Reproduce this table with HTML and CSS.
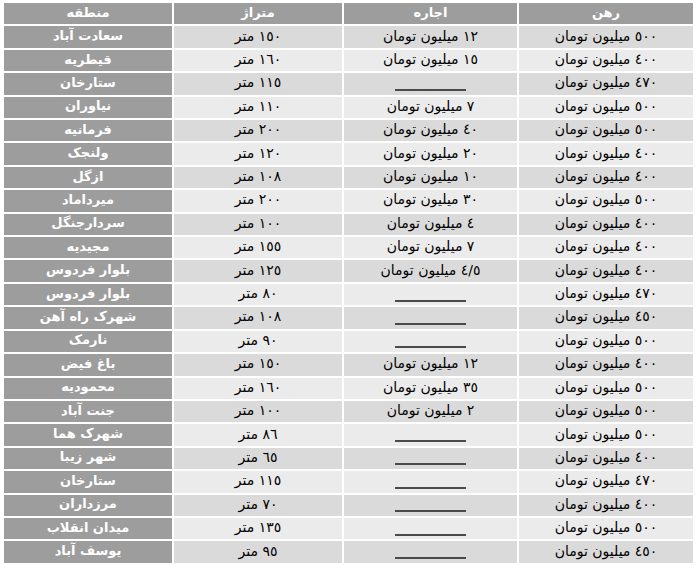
FILE: index.html
```html
<!DOCTYPE html>
<html lang="fa">
<head>
<meta charset="utf-8">
<title>جدول قیمت رهن و اجاره</title>
<link rel="stylesheet" href="styles.css">
</head>
<body>
<div class="table">
  <div class="cell head">منطقه</div><div class="cell head">متراژ</div><div class="cell head">اجاره</div><div class="cell head">رهن</div>

  <div class="cell area">سعادت آباد</div><div class="cell odd">١٥٠ متر</div><div class="cell odd">١٢ میلیون تومان</div><div class="cell odd">٥٠٠ میلیون تومان</div>
  <div class="cell area">قیطریه</div><div class="cell even">١٦٠ متر</div><div class="cell even">١٥ میلیون تومان</div><div class="cell even">٤٠٠ میلیون تومان</div>
  <div class="cell area">ستارخان</div><div class="cell odd">١١٥ متر</div><div class="cell odd"><span class="dash"></span></div><div class="cell odd">٤٧٠ میلیون تومان</div>
  <div class="cell area">نیاوران</div><div class="cell even">١١٠ متر</div><div class="cell even">٧ میلیون تومان</div><div class="cell even">٥٠٠ میلیون تومان</div>
  <div class="cell area">فرمانیه</div><div class="cell odd">٢٠٠ متر</div><div class="cell odd">٤٠ میلیون تومان</div><div class="cell odd">٥٠٠ میلیون تومان</div>
  <div class="cell area">ولنجک</div><div class="cell even">١٢٠ متر</div><div class="cell even">٢٠ میلیون تومان</div><div class="cell even">٤٠٠ میلیون تومان</div>
  <div class="cell area">ازگل</div><div class="cell odd">١٠٨ متر</div><div class="cell odd">١٠ میلیون تومان</div><div class="cell odd">٤٠٠ میلیون تومان</div>
  <div class="cell area">میرداماد</div><div class="cell even">٢٠٠ متر</div><div class="cell even">٣٠ میلیون تومان</div><div class="cell even">٥٠٠ میلیون تومان</div>
  <div class="cell area">سردارجنگل</div><div class="cell odd">١٠٠ متر</div><div class="cell odd">٤ میلیون تومان</div><div class="cell odd">٤٠٠ میلیون تومان</div>
  <div class="cell area">مجیدیه</div><div class="cell even">١٥٥ متر</div><div class="cell even">٧ میلیون تومان</div><div class="cell even">٤٠٠ میلیون تومان</div>
  <div class="cell area">بلوار فردوس</div><div class="cell odd">١٢٥ متر</div><div class="cell odd">٤/٥ میلیون تومان</div><div class="cell odd">٤٠٠ میلیون تومان</div>
  <div class="cell area">بلوار فردوس</div><div class="cell even">٨٠ متر</div><div class="cell even"><span class="dash"></span></div><div class="cell even">٤٧٠ میلیون تومان</div>
  <div class="cell area">شهرک راه آهن</div><div class="cell odd">١٠٨ متر</div><div class="cell odd"><span class="dash"></span></div><div class="cell odd">٤٥٠ میلیون تومان</div>
  <div class="cell area">نارمک</div><div class="cell even">٩٠ متر</div><div class="cell even"><span class="dash"></span></div><div class="cell even">٥٠٠ میلیون تومان</div>
  <div class="cell area">باغ فیض</div><div class="cell odd">١٥٠ متر</div><div class="cell odd">١٢ میلیون تومان</div><div class="cell odd">٤٠٠ میلیون تومان</div>
  <div class="cell area">محمودیه</div><div class="cell even">١٦٠ متر</div><div class="cell even">٣٥ میلیون تومان</div><div class="cell even">٥٠٠ میلیون تومان</div>
  <div class="cell area">جنت آباد</div><div class="cell odd">١٠٠ متر</div><div class="cell odd">٢ میلیون تومان</div><div class="cell odd">٥٠٠ میلیون تومان</div>
  <div class="cell area">شهرک هما</div><div class="cell even">٨٦ متر</div><div class="cell even"><span class="dash"></span></div><div class="cell even">٥٠٠ میلیون تومان</div>
  <div class="cell area">شهر زیبا</div><div class="cell odd">٦٥ متر</div><div class="cell odd"><span class="dash"></span></div><div class="cell odd">٤٠٠ میلیون تومان</div>
  <div class="cell area">ستارخان</div><div class="cell even">١١٥ متر</div><div class="cell even"><span class="dash"></span></div><div class="cell even">٤٧٠ میلیون تومان</div>
  <div class="cell area">مرزداران</div><div class="cell odd">٧٠ متر</div><div class="cell odd"><span class="dash"></span></div><div class="cell odd">٤٠٠ میلیون تومان</div>
  <div class="cell area">میدان انقلاب</div><div class="cell even">١٣٥ متر</div><div class="cell even"><span class="dash"></span></div><div class="cell even">٥٠٠ میلیون تومان</div>
  <div class="cell area">یوسف آباد</div><div class="cell odd">٩٥ متر</div><div class="cell odd"><span class="dash"></span></div><div class="cell odd">٤٥٠ میلیون تومان</div>
</div>
</body>
</html>
```

FILE: styles.css
```css
html, body {
  margin: 0;
  padding: 0;
  background: #ffffff;
}

body {
  font-family: "DejaVu Sans", sans-serif;
}

.table {
  display: grid;
  grid-template-columns: 168px 168px 173px 174px;
  grid-auto-rows: 21.42px;
  gap: 2px;
  width: max-content;
  margin: 3px 0 0 4px;
}

.cell {
  display: flex;
  align-items: center;
  justify-content: center;
  direction: rtl;
  font-size: 14px;
  color: #000000;
  padding-bottom: 3px;
  box-sizing: border-box;
  white-space: nowrap;
}

.head {
  background: #9d9d9d;
  color: #ffffff;
  font-weight: bold;
  font-size: 13px;
}

.area {
  background: #9d9d9d;
  color: #ffffff;
  font-weight: bold;
  font-size: 13px;
}

.odd {
  background: #dadada;
}

.even {
  background: #ebebeb;
}

.dash {
  display: block;
  width: 71px;
  height: 2px;
  background: #4a4a4a;
  margin-top: 15px;
}
```
